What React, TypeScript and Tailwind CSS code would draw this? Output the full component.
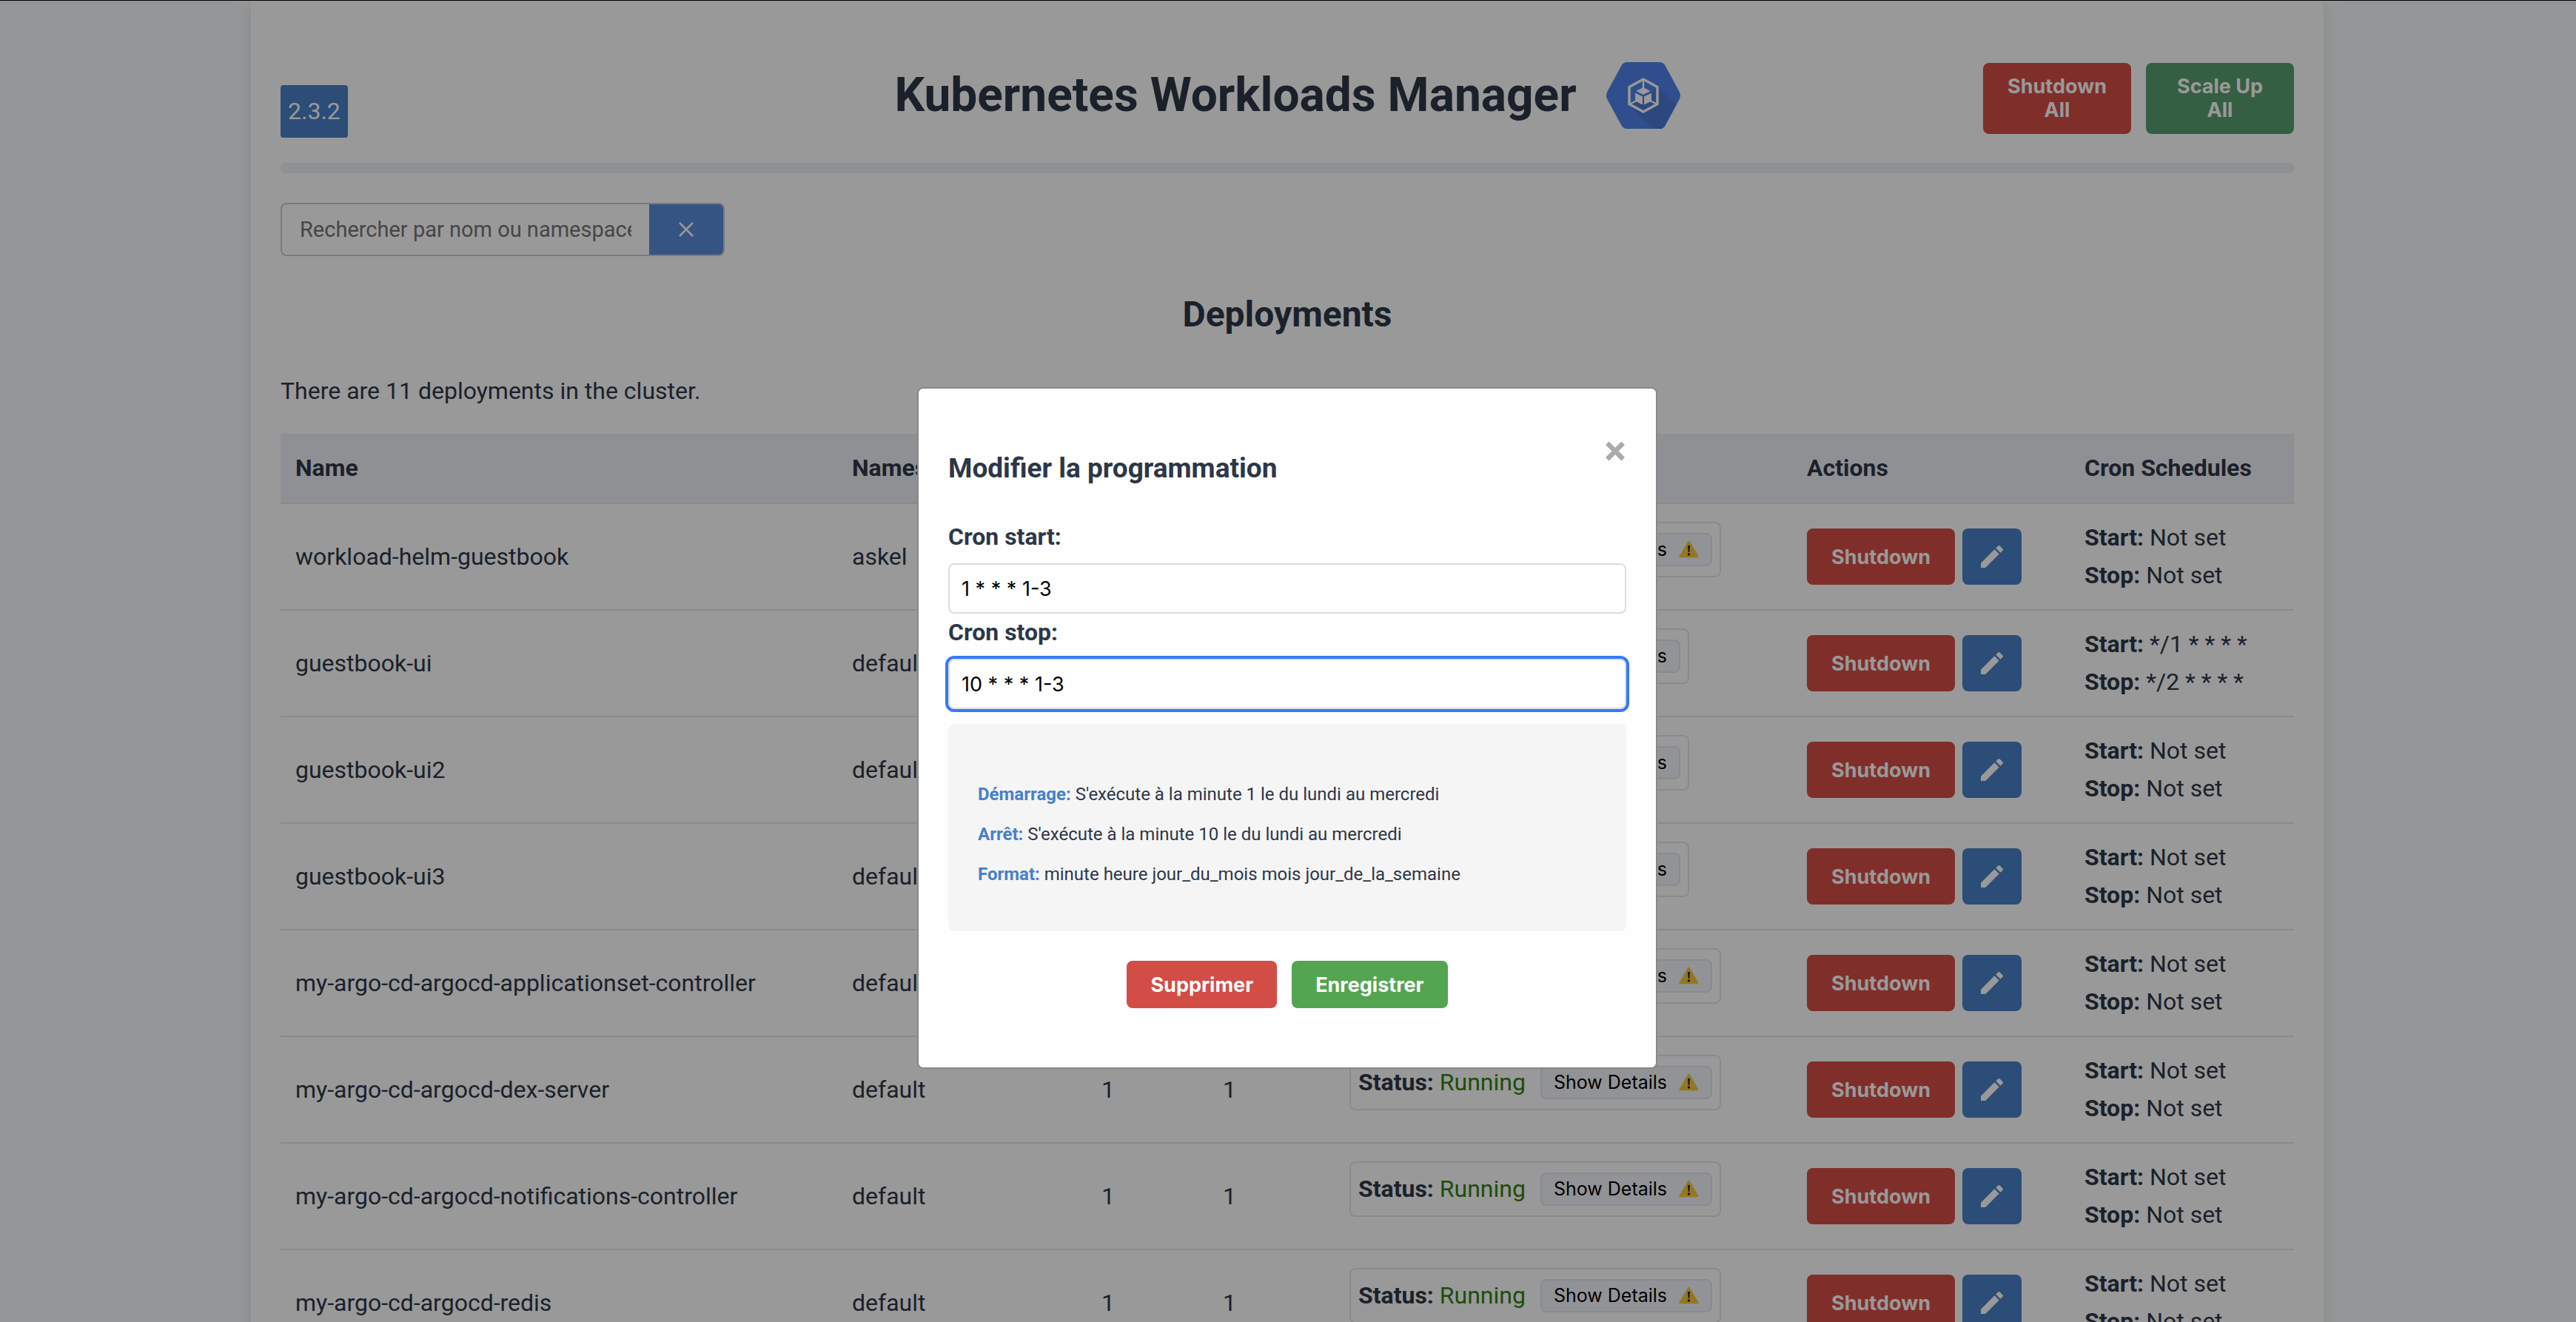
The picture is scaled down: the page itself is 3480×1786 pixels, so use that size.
import { useState } from "react";
import { MdEdit } from "react-icons/md";

type Deployment = {
  name: string;
  namespace: string;
  start: string;
  stop: string;
  warning: boolean;
};

const DEPLOYMENTS: Deployment[] = [
  { name: "workload-helm-guestbook", namespace: "askel", start: "Not set", stop: "Not set", warning: true },
  { name: "guestbook-ui", namespace: "default", start: "*/1 * * * *", stop: "*/2 * * * *", warning: false },
  { name: "guestbook-ui2", namespace: "default", start: "Not set", stop: "Not set", warning: false },
  { name: "guestbook-ui3", namespace: "default", start: "Not set", stop: "Not set", warning: false },
  { name: "my-argo-cd-argocd-applicationset-controller", namespace: "default", start: "Not set", stop: "Not set", warning: true },
  { name: "my-argo-cd-argocd-dex-server", namespace: "default", start: "Not set", stop: "Not set", warning: true },
  { name: "my-argo-cd-argocd-notifications-controller", namespace: "default", start: "Not set", stop: "Not set", warning: true },
  { name: "my-argo-cd-argocd-redis", namespace: "default", start: "Not set", stop: "Not set", warning: true },
];

function KubernetesLogo() {
  return (
    <svg viewBox="0 0 100 90" className="h-[90px] w-[100px]" aria-hidden="true">
      <defs>
        <clipPath id="hexagon">
          <path d="M28 0H72Q77 0 79.500 4.500L98.500 39.500Q101.500 45 98.500 50.500L79.500 85.500Q77 90 72 90H28Q23 90 20.500 85.500L1.500 50.500Q-1.500 45 1.500 39.500L20.500 4.500Q23 0 28 0Z" />
        </clipPath>
      </defs>
      <g clipPath="url(#hexagon)">
        <rect width="100" height="90" fill="#5083ec" />
        <path d="M70 34L100 62V90H64L31 58Z" fill="#4a79d4" />
      </g>
      <path d="M50 23L69 33.500V56.500L50 67L31 56.500V33.500Z" fill="none" stroke="#fff" strokeWidth="3.500" strokeLinejoin="round" />
      <path d="M50 23V36M31 57L41 52M69 57L59 52" stroke="#fff" strokeWidth="2.500" />
      <path d="M50 34L59.500 39L50 44L40.500 39Z" fill="#fff" />
      <path d="M39 41.500L49 46.500V57.500L39 52.500ZM61 41.500L51 46.500V57.500L61 52.500Z" fill="#fff" />
    </svg>
  );
}

function WarningIcon() {
  return (
    <svg viewBox="0 0 27 24" className="h-6 w-[27px]" role="img" aria-label="Warning">
      <path d="M13.500 0.800Q14.500 0.800 15 1.700L26.300 21.300Q27 23.200 25.300 23.200H1.700Q0 23.200 0.700 21.300L12 1.700Q12.500 0.800 13.500 0.800Z" fill="#f5c83c" />
      <path d="M12 7.500Q13.500 6 15 7.500L14.300 16H12.700Z" fill="#222" />
      <circle cx="13.500" cy="19" r="1.700" fill="#222" />
    </svg>
  );
}

function Row({ item }: { item: Deployment }) {
  return (
    <tr className="h-36 border-b-2 border-[#e2e8f0]">
      <td className="px-5">{item.name}</td>
      <td className="px-5">{item.namespace}</td>
      <td className="px-5">1</td>
      <td className="px-5">1</td>
      <td className="px-5">
        <div className="mb-5 inline-flex h-[75px] items-center gap-5 rounded-lg border-2 border-[#e2e8f0] px-2.5 align-middle">
          <span>
            <strong>Status:</strong> <span className="text-[#338113]">Running</span>
          </span>
          <button
            type="button"
            className="flex h-[45px] items-center gap-4 rounded-lg border-2 border-[#e2e8f0] bg-[#f4f6fa] px-4 font-[Inter,sans-serif] text-[25px] leading-8 text-black"
          >
            Show Details
            {item.warning && <WarningIcon />}
          </button>
        </div>
      </td>
      <td className="px-5">
        <div className="flex gap-2.5">
          <button
            type="button"
            className="h-[76px] w-[200px] rounded-lg bg-[#d54d46] font-[Inter,sans-serif] text-[27px] font-bold text-white"
          >
            Shutdown
          </button>
          <button
            type="button"
            aria-label="Edit schedule"
            className="flex h-[76px] w-20 items-center justify-center rounded-lg bg-[#4880c6] text-[40px] text-white"
          >
            <MdEdit />
          </button>
        </div>
      </td>
      <td className="px-5">
        <div>
          <strong>Start:</strong> {item.start}
        </div>
        <div>
          <strong>Stop:</strong> {item.stop}
        </div>
      </td>
    </tr>
  );
}

function ScheduleDialog() {
  const [start, setStart] = useState("1 * * * 1-3");
  const [stop, setStop] = useState("10 * * * 1-3");
  return (
    <div className="fixed inset-0 bg-black/40 pt-px pr-0.5">
      <div
        role="dialog"
        aria-labelledby="dialog-title"
        className="mx-auto mt-[15vw] w-[1000px] rounded-lg border-2 border-[#888] bg-[#fefefe] px-10 pt-10 pb-20"
      >
        <div className="flex h-[135px] items-start justify-between">
          <h3 id="dialog-title" className="pt-10 text-[37px] leading-[56px] font-bold">
            Modifier la programmation
          </h3>
          <button type="button" aria-label="Fermer" className="text-[56px] leading-[88px] font-bold text-[#aaa]">
            ×
          </button>
        </div>
        <form>
          <label htmlFor="cron-start" className="block leading-[51px] font-bold">
            Cron start:
          </label>
          <input
            id="cron-start"
            value={start}
            onChange={(e) => setStart(e.target.value)}
            className="mt-2.5 block h-[68px] w-full rounded-lg border-2 border-[#ddd] bg-white px-4 font-[Inter,sans-serif] text-[27px] text-black"
          />
          <label htmlFor="cron-stop" className="block leading-[51px] font-bold">
            Cron stop:
          </label>
          <input
            id="cron-stop"
            value={stop}
            onChange={(e) => setStop(e.target.value)}
            className="mt-2.5 block h-[68px] w-full rounded-lg border-2 border-[#ddd] bg-white px-4 font-[Inter,sans-serif] text-[27px] text-black outline-4 outline-[#3579f6]"
          />
          <div className="mt-5 flex h-[280px] flex-col gap-4 rounded-lg bg-[#f5f5f5] px-10 pt-19 text-[24px] leading-[38px]">
            <p>
              <strong className="text-[#4880c6]">Démarrage:</strong> S'exécute à la minute 1 le du lundi au mercredi
            </p>
            <p>
              <strong className="text-[#4880c6]">Arrêt:</strong> S'exécute à la minute 10 le du lundi au mercredi
            </p>
            <p>
              <strong className="text-[#4880c6]">Format:</strong> minute heure jour_du_mois mois jour_de_la_semaine
            </p>
          </div>
          <div className="mt-10 flex justify-center gap-5 font-[Inter,sans-serif] text-[27px] font-bold text-white">
            <button type="button" className="h-16 rounded-lg bg-[#d24d46] px-8">
              Supprimer
            </button>
            <button type="submit" className="h-16 rounded-lg bg-[#53a551] px-8">
              Enregistrer
            </button>
          </div>
        </form>
      </div>
    </div>
  );
}

export default function App() {
  const [query, setQuery] = useState("");
  return (
    <div className="h-screen overflow-hidden border-t border-black bg-[#f7fafc] pr-0.5 font-[Roboto,sans-serif] text-[32px] leading-[51px] text-[#2d3748]">
      <main className="mx-auto min-h-screen max-w-[2800px] rounded-t bg-white px-10 shadow-[0_8px_24px_rgba(0,0,0,0.1)]">
        <header className="grid h-[219px] grid-cols-[1fr_auto_1fr] items-start">
          <span className="mt-[114px] h-[71px] justify-self-start rounded bg-[#4880c6] px-2.5 py-2.5 text-white">2.3.2</span>
          <h1 className="mt-[82px] flex items-center gap-10 text-[64px] leading-[92px] font-bold">
            Kubernetes Workloads Manager
            <KubernetesLogo />
          </h1>
          <div className="mt-[84px] flex gap-5 justify-self-end font-[Inter,sans-serif] text-[27px] leading-8 font-bold text-white">
            <button type="button" className="h-24 w-[200px] rounded-lg bg-[#d54d46] px-8">
              Shutdown All
            </button>
            <button type="button" className="h-24 w-[200px] rounded-lg bg-[#589e6e] px-8">
              Scale Up All
            </button>
          </div>
        </header>
        <hr className="h-3.5 rounded-md border-0 bg-[#eef0f6]" />
        <div className="mt-10 flex h-[72px] w-[600px] overflow-hidden rounded-lg border-2 border-[#ccc]">
          <input
            aria-label="Rechercher par nom ou namespace"
            placeholder="Rechercher par nom ou namespace"
            value={query}
            onChange={(e) => setQuery(e.target.value)}
            className="min-w-0 flex-1 px-6 text-[29px] text-[#2d3748] placeholder:text-[#757575]"
          />
          <button
            type="button"
            aria-label="Effacer la recherche"
            onClick={() => setQuery("")}
            className="flex w-[100px] items-center justify-center bg-[#5a8cda] text-white"
          >
            <svg viewBox="0 0 20 20" className="size-5" fill="none" stroke="currentColor" strokeWidth="2.500">
              <path d="M1 1L19 19M19 1L1 19" />
            </svg>
          </button>
        </div>
        <h2 className="mt-10 text-center text-[48px] leading-[77px] font-bold">Deployments</h2>
        <p className="mt-10">There are 11 deployments in the cluster.</p>
        <table className="mt-8 w-full table-fixed border-collapse text-left">
          <colgroup>
            <col className="w-[752px]" />
            <col className="w-[337px]" />
            <col className="w-[164px]" />
            <col className="w-[171px]" />
            <col className="w-[618px]" />
            <col className="w-[375px]" />
            <col className="w-[303px]" />
          </colgroup>
          <thead>
            <tr className="h-[94px] border-b-2 border-[#e2e8f0] bg-[#eef0f6]">
              <th className="px-5">Name</th>
              <th className="px-5">Namespace</th>
              <th className="px-5">Min</th>
              <th className="px-5">Max</th>
              <th className="px-5">Status</th>
              <th className="px-5">Actions</th>
              <th className="px-5">Cron Schedules</th>
            </tr>
          </thead>
          <tbody>
            {DEPLOYMENTS.map((item) => (
              <Row key={item.name} item={item} />
            ))}
          </tbody>
        </table>
      </main>
      <ScheduleDialog />
    </div>
  );
}
